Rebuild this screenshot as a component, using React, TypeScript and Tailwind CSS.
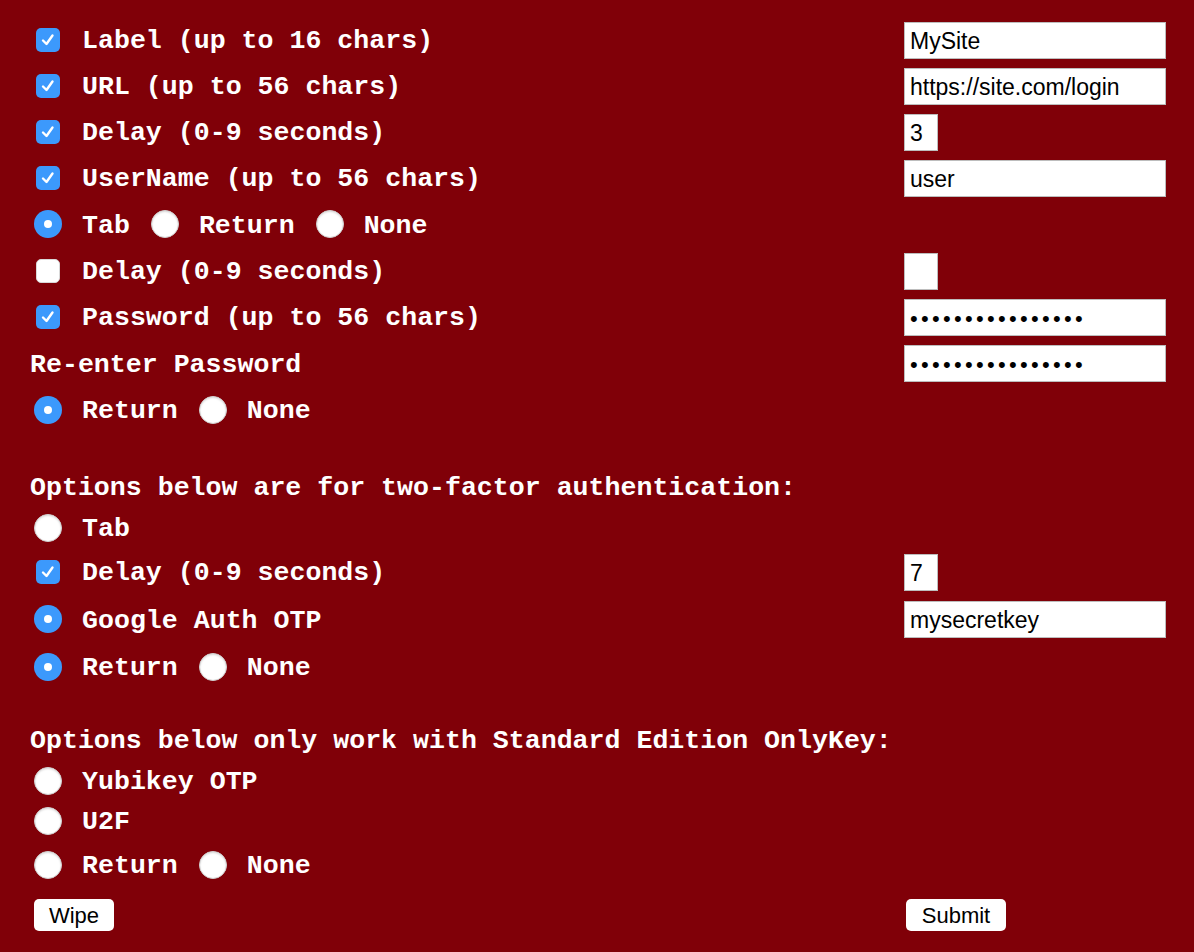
import React from "react";

const mono = { fontFamily: '"Liberation Mono", "Courier New", monospace' };
const sans = { fontFamily: '"Liberation Sans", Arial, sans-serif' };

function Check({ on }: { on: boolean }) {
  if (on)
    return (
      <span className="ml-[6px] mr-[22px] flex h-[24px] w-[24px] shrink-0 items-center justify-center rounded-[5px] bg-[#3c99fc]">
        <svg width="18" height="18" viewBox="0 0 18 18">
          <path d="M4 9.5 L7.5 13 L13.5 4.5" fill="none" stroke="white" strokeWidth="2.4" strokeLinecap="round" strokeLinejoin="round" />
        </svg>
      </span>
    );
  return <span className="ml-[6px] mr-[22px] h-[24px] w-[24px] shrink-0 rounded-[5px] border border-[#d8d8d8] bg-white" />;
}

function Radio({ on, first }: { on: boolean; first?: boolean }) {
  const m = first ? "ml-[4px] mr-[20px]" : "ml-[21px] mr-[20px]";
  if (on)
    return (
      <span className={`${m} flex h-[28px] w-[28px] shrink-0 items-center justify-center rounded-full bg-[#3c99fc]`}>
        <span className="h-[8px] w-[8px] rounded-full bg-white" />
      </span>
    );
  return <span className={`${m} h-[28px] w-[28px] shrink-0 rounded-full border border-[#d0d0d0] bg-white shadow-[inset_0_1px_2px_rgba(0,0,0,0.15)]`} />;
}

function T({ children }: { children: React.ReactNode }) {
  return <span className="pt-[4px]">{children}</span>;
}

function Field({ value, small, pw }: { value?: string; small?: boolean; pw?: boolean }) {
  return (
    <div
      className={`flex h-[37px] items-center border border-[#bdbdbd] bg-white pl-[5px] pt-[2px] font-normal text-black ${small ? "w-[34px]" : "w-[262px]"} ${pw ? "text-[22px] tracking-[3.3px]" : "text-[23px]"}`}
      style={sans}
    >
      {value}
    </div>
  );
}

function Row({ h, children, right }: { h: number; children: React.ReactNode; right?: React.ReactNode }) {
  return (
    <div className="flex items-center" style={{ height: h }}>
      <div className="flex w-[874px] items-center">{children}</div>
      {right}
    </div>
  );
}

export default function App() {
  return (
    <div className="min-h-[952px] w-full bg-[#800008] pl-[30px] pt-[17px] text-[26.6px] font-bold text-white" style={mono}>
      <Row h={46} right={<Field value="MySite" />}>
        <Check on />
        <T>Label (up to 16 chars)</T>
      </Row>
      <Row h={46} right={<Field value="https://site.com/login" />}>
        <Check on />
        <T>URL (up to 56 chars)</T>
      </Row>
      <Row h={46} right={<Field value="3" small />}>
        <Check on />
        <T>Delay (0-9 seconds)</T>
      </Row>
      <Row h={46} right={<Field value="user" />}>
        <Check on />
        <T>UserName (up to 56 chars)</T>
      </Row>
      <Row h={47}>
        <Radio on first />
        <T>Tab</T>
        <Radio on={false} />
        <T>Return</T>
        <Radio on={false} />
        <T>None</T>
      </Row>
      <Row h={46} right={<Field value="" small />}>
        <Check on={false} />
        <T>Delay (0-9 seconds)</T>
      </Row>
      <Row h={46} right={<Field value={"\u2022".repeat(16)} pw />}>
        <Check on />
        <T>Password (up to 56 chars)</T>
      </Row>
      <Row h={47} right={<Field value={"\u2022".repeat(16)} pw />}>
        <T>Re-enter Password</T>
      </Row>
      <Row h={46}>
        <Radio on first />
        <T>Return</T>
        <Radio on={false} />
        <T>None</T>
      </Row>

      <div className="h-[34px]" />
      <Row h={40}>
        <T>Options below are for two-factor authentication:</T>
      </Row>
      <Row h={42}>
        <Radio on={false} first />
        <T>Tab</T>
      </Row>
      <Row h={46} right={<Field value="7" small />}>
        <Check on />
        <T>Delay (0-9 seconds)</T>
      </Row>
      <Row h={49} right={<Field value="mysecretkey" />}>
        <Radio on first />
        <T>Google Auth OTP</T>
      </Row>
      <Row h={46}>
        <Radio on first />
        <T>Return</T>
        <Radio on={false} />
        <T>None</T>
      </Row>

      <div className="h-[30px]" />
      <Row h={40}>
        <T>Options below only work with Standard Edition OnlyKey:</T>
      </Row>
      <Row h={42}>
        <Radio on={false} first />
        <T>Yubikey OTP</T>
      </Row>
      <Row h={38}>
        <Radio on={false} first />
        <T>U2F</T>
      </Row>
      <Row h={50}>
        <Radio on={false} first />
        <T>Return</T>
        <Radio on={false} />
        <T>None</T>
      </Row>
      <div className="h-[9px]" />
      <div className="flex h-[32px] items-start">
        <div className="flex w-[876px] pl-[4px]">
          <button className="flex h-[32px] w-[80px] items-center justify-center rounded-[5px] bg-white pt-[1px] text-[22px] font-normal text-black" style={sans}>
            Wipe
          </button>
        </div>
        <button className="flex h-[32px] w-[100px] items-center justify-center rounded-[5px] bg-white pt-[1px] text-[22px] font-normal text-black" style={sans}>
          Submit
        </button>
      </div>
    </div>
  );
}
